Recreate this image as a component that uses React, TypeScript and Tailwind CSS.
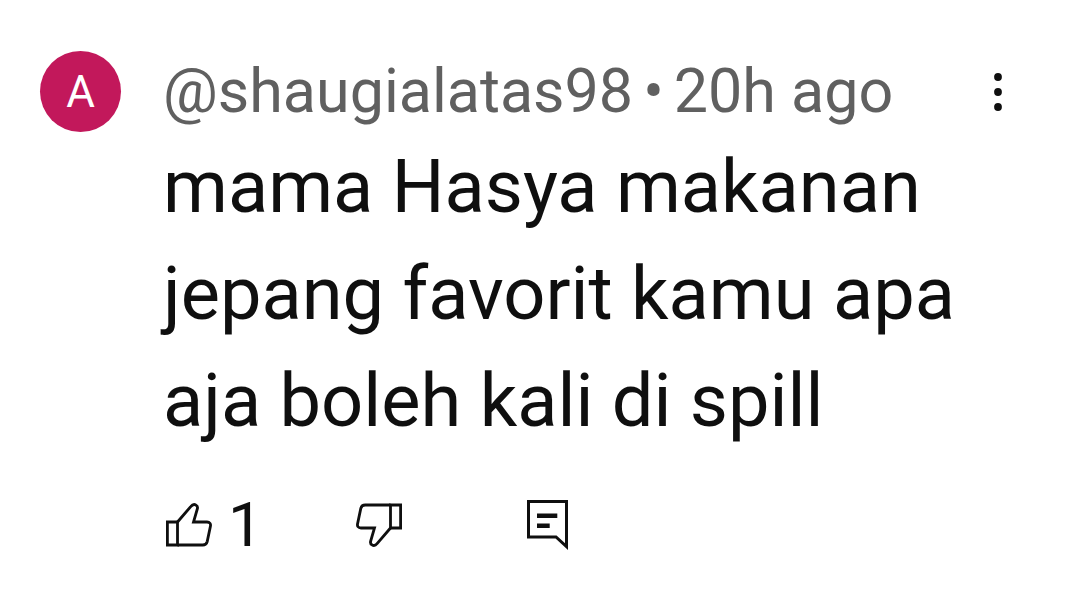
type Comment = {
  author: string;
  initial: string;
  age: string;
  text: string;
  likes: number;
};

const COMMENT: Comment = {
  author: '@shaugialatas98',
  initial: 'A',
  age: '20h ago',
  text: 'mama Hasya makanan jepang favorit kamu apa aja boleh kali di spill',
  likes: 1,
};

function ThumbIcon({ className = '' }: { className?: string }) {
  return (
    <svg viewBox="0 0 46 44" className={`h-11 w-[46px] ${className}`} fill="none" stroke="currentColor" strokeWidth="2.8" aria-hidden="true">
      <path d="M1.4 19H11.5V42H1.4Z" />
      <path d="M11.5 19L24.7 3.6C26.5 1.4 28.4 1.1 30 2.1C31.6 3.1 31.8 4.4 31.3 6L27.5 19H41C43.8 19 45 20.8 44.4 23.4L41.2 38.6C40.6 41 39.2 42 36.8 42H11.5" />
    </svg>
  );
}

function ReplyIcon() {
  return (
    <svg viewBox="0 0 41 50" className="h-[50px] w-[41px]" fill="none" stroke="currentColor" aria-hidden="true">
      <path d="M1.5 1.5H39.5V46.5L29 37H1.5Z" strokeWidth="3" />
      <path d="M10 15.7H30.3M10 25.8H22.7" strokeWidth="4.6" />
    </svg>
  );
}

export default function App() {
  return (
    <main className="min-h-screen bg-white font-['Roboto',sans-serif] text-[#0f0f0f]">
      <article className="flex items-start pt-[51px] pr-[77px] pl-10">
        <div className="flex size-[81px] shrink-0 items-center justify-center rounded-full bg-[#c2185b] text-[44px] text-white">
          {COMMENT.initial}
        </div>
        <div className="ml-[42px] min-w-0 flex-1">
          <header className="flex h-[82px] items-center justify-between text-[#606060]">
            <p className="flex gap-[10px] text-[61px] whitespace-nowrap">
              <span>{COMMENT.author}</span>
              <span>•</span>
              <span>{COMMENT.age}</span>
            </p>
            <button type="button" aria-label="More actions" className="text-[#0f0f0f]">
              <svg viewBox="0 0 8 40" className="h-10 w-2" fill="currentColor" aria-hidden="true">
                <circle cx="4" cy="5" r="3.9" />
                <circle cx="4" cy="20" r="3.9" />
                <circle cx="4" cy="35" r="3.9" />
              </svg>
            </button>
          </header>
          <p className="text-[74px] leading-[107px]">{COMMENT.text}</p>
          <div className="mt-10 flex items-center pl-[3px]">
            <button type="button" aria-label="Like" className="flex items-center gap-4 text-[62px] leading-none">
              <ThumbIcon />
              {COMMENT.likes}
            </button>
            <button type="button" aria-label="Dislike" className="ml-[93px]">
              <ThumbIcon className="rotate-180" />
            </button>
            <button type="button" aria-label="Reply" className="ml-[125px]">
              <ReplyIcon />
            </button>
          </div>
        </div>
      </article>
    </main>
  );
}
